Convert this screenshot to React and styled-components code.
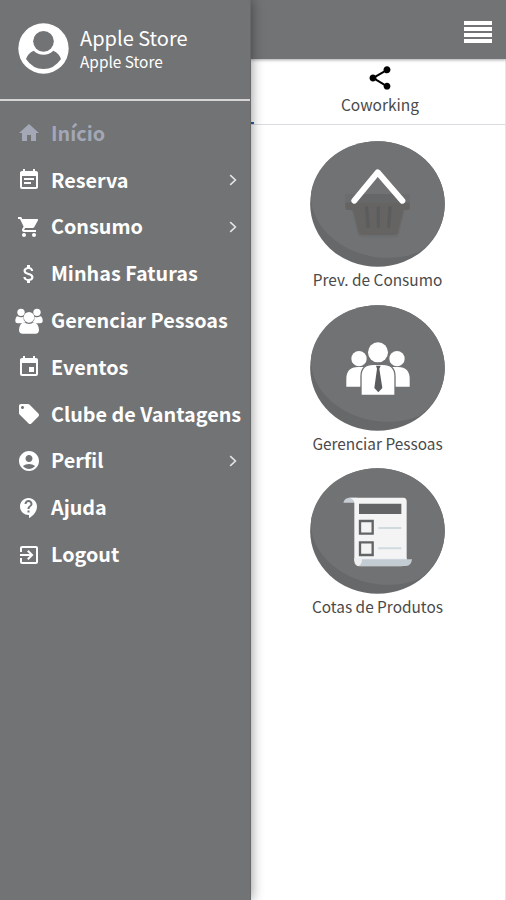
import React from "react";
import styled, { createGlobalStyle } from "styled-components";
import {
  MdHome,
  MdEventNote,
  MdShoppingCart,
  MdAttachMoney,
  MdEvent,
  MdLocalOffer,
  MdAccountCircle,
  MdContactSupport,
  MdExitToApp,
  MdShare,
} from "react-icons/md";

const theme = {
  grey: "#727375",
  disc: "#707273",
  discShade: "#66686a",
  muted: "#a3a7b6",
};

const PeopleIcon = () => (
  <svg width="28" height="26" viewBox="0 0 84 78" fill="currentColor">
    <circle cx="18" cy="13" r="11" />
    <circle cx="66" cy="13" r="11" />
    <path d="M8 25q9 5 17 1q-1 10 7 17q-6 0-9 3H9Q0 46 1 37Q2 26 8 25z" />
    <path d="M76 25q-9 5-17 1q1 10-7 17q6 0 9 3h14q9 0 8-9q-1-11-7-12z" />
    <circle cx="42" cy="28" r="16" />
    <path d="M27 43q15 10 30 0q14 4 15 23q0 11-11 11H23q-11 0-11-11q1-19 15-23z" />
  </svg>
);

const Avatar = () => (
  <svg width="51" height="51" viewBox="0 0 153 153">
    <circle cx="76.500" cy="76.500" r="75.500" fill="#fff" />
    <circle cx="76.500" cy="55" r="31" fill={theme.grey} />
    <path
      d="M47 83Q29 91 24 108Q44 138 76.500 138Q109 138 129 108Q124 91 106 83Q94 95 76.500 95Q59 95 47 83z"
      fill={theme.grey}
    />
  </svg>
);

const Chevron = () => (
  <svg width="8" height="12" viewBox="0 0 8 12" fill="none">
    <path d="M1.200 1.200L6.400 6L1.200 10.800" stroke="#e5e5e6" strokeWidth="1.600" />
  </svg>
);

const Disc = ({ children }) => (
  <svg width="135" height="126" viewBox="0 0 405 378">
    <ellipse cx="202.500" cy="189" rx="202" ry="188.500" fill={theme.discShade} />
    <path
      d="M4 150C22 62 104 1 203 1C314 1 404 85 404 189C404 249 374 301 326 334C292 347 260 352 218 350C112 344 22 275 6 195Q2 172 4 150z"
      fill={theme.disc}
    />
    {children}
  </svg>
);

const BasketArt = () => (
  <Disc>
    <path d="M106 159h193v37q0 12-15 12l-16 68q-3 13-15 13H157q-12 0-15-13l-17-68q-19 0-19-12z" fill="#6b6d6e" />
    <path d="M135 159h136l12 26H122z" fill="#666768" />
    <path d="M106 185h193v16q0 6-9 6h-9l-17 66q-2 9-12 9H158q-10 0-12-9l-17-66h-15q-8 0-8-6z" fill="#666463" />
    <path d="M170 200l4 56M205 200v56M240 200l-4 56" stroke="#5b5c5d" strokeWidth="10" strokeLinecap="round" />
    <path
      d="M133 179L203 94L277 179"
      fill="none"
      stroke="#fff"
      strokeWidth="18"
      strokeLinecap="round"
      strokeLinejoin="round"
    />
  </Disc>
);

const TeamArt = () => (
  <Disc>
    <g fill="#fff">
      <circle cx="147" cy="161" r="23" />
      <circle cx="261" cy="161" r="23" />
      <path d="M109 245v-24q0-34 35-35h22l-14 59z" />
      <path d="M299 245v-24q0-34-35-35h-22l14 59z" />
    </g>
    <path d="M153 271v-57q0-36 37-36h28q37 0 37 36v57z" fill="#fff" stroke={theme.disc} strokeWidth="4" />
    <circle cx="204" cy="142" r="30" fill="#fff" />
    <path d="M198 182h14l-4 9l9 58l-12 13l-12-13l8-58z" fill="#595b5d" />
  </Disc>
);

const ListArt = () => (
  <Disc>
    <path d="M100 104q3-13 17-15h25v15z" fill="#c6cdd3" />
    <path d="M118 89h162q10 0 10 11v188H149q-13 0-16-11V103q-2-10-15-14z" fill="#f4f4f5" />
    <path d="M133 270h157v9q-1 16-17 16H149q-16-1-16-17z" fill="#eeeff1" />
    <path d="M156 274h150q-2 20-18 20H146q10-5 10-20z" fill="#c3cbd3" />
    <path d="M147 107h127v31H147z" fill="#626466" />
    <g fill="#f4f4f5" stroke="#626466" strokeWidth="7">
      <path d="M150 159h38v38h-38z" />
      <path d="M150 223h38v38h-38z" />
    </g>
    <path d="M205 180h69M205 241h69" stroke="#d0d9de" strokeWidth="6" />
  </Disc>
);

const menu = [
  { label: "Início", icon: MdHome, active: true },
  { label: "Reserva", icon: MdEventNote, more: true },
  { label: "Consumo", icon: MdShoppingCart, more: true },
  { label: "Minhas Faturas", icon: MdAttachMoney },
  { label: "Gerenciar Pessoas", icon: PeopleIcon },
  { label: "Eventos", icon: MdEvent },
  { label: "Clube de Vantagens", icon: MdLocalOffer },
  { label: "Perfil", icon: MdAccountCircle, more: true },
  { label: "Ajuda", icon: MdContactSupport },
  { label: "Logout", icon: MdExitToApp },
];

const services = [
  { label: "Prev. de Consumo", art: BasketArt },
  { label: "Gerenciar Pessoas", art: TeamArt },
  { label: "Cotas de Produtos", art: ListArt },
];

const App = () => (
  <>
    <GlobalStyle />
    <Screen>
      <Sidebar>
        <Profile>
          <Avatar />
          <div>
            <UserName>Apple Store</UserName>
            <UserPlace>Apple Store</UserPlace>
          </div>
        </Profile>
        <Menu>
          {menu.map(({ label, icon: Icon, active, more }) => (
            <MenuItem key={label} $active={active}>
              <IconBox>
                <Icon />
              </IconBox>
              <MenuLabel>{label}</MenuLabel>
              {more && <Chevron />}
            </MenuItem>
          ))}
        </Menu>
      </Sidebar>
      <Main>
        <TopBar>
          <MenuButton aria-label="Menu">
            <span />
            <span />
            <span />
            <span />
          </MenuButton>
        </TopBar>
        <Tab>
          <MdShare size={28} />
          <TabLabel>Coworking</TabLabel>
          <TabMarker />
        </Tab>
        <Services>
          {services.map(({ label, art: Art }) => (
            <Service key={label}>
              <Art />
              <ServiceLabel>{label}</ServiceLabel>
            </Service>
          ))}
        </Services>
      </Main>
    </Screen>
  </>
);

export default App;

const GlobalStyle = createGlobalStyle`
  * {
    box-sizing: border-box;
  }

  body {
    margin: 0;
    font-family: "Noto Sans CJK JP", "Noto Sans", sans-serif;
  }

  svg {
    display: block;
    flex-shrink: 0;
  }
`;

const Screen = styled.div`
  display: flex;
  width: 506px;
  height: 900px;
  overflow: hidden;
  background: white;
`;

const Sidebar = styled.aside`
  position: relative;
  z-index: 1;
  width: 251px;
  flex-shrink: 0;
  margin-right: -1px;
  color: white;
  background: ${theme.grey};
  border-right: 1px solid #68696b;
  box-shadow: 0 0 12px rgba(0, 0, 0, 0.45);
`;

const Profile = styled.div`
  display: flex;
  align-items: center;
  gap: 11px;
  height: 101px;
  padding: 0 0 2px 18px;
  border-bottom: 2px solid #d5d5d6;
`;

const UserName = styled.div`
  font-size: 20px;
  line-height: 25px;
`;

const UserPlace = styled.div`
  font-size: 15.400px;
  line-height: 23px;
`;

const Menu = styled.nav`
  display: flex;
  flex-direction: column;
  padding-top: 9px;
`;

const MenuItem = styled.a`
  display: flex;
  align-items: center;
  height: 46.800px;
  padding: 0 13px 0 14px;
  color: ${({ $active }) => ($active ? theme.muted : "white")};
`;

const IconBox = styled.span`
  display: flex;
  justify-content: center;
  flex-shrink: 0;
  width: 29px;
  margin-right: 8px;
  font-size: 24px;
`;

const MenuLabel = styled.span`
  flex: 1;
  min-width: 0;
  margin-top: -1px;
  font-size: 19.800px;
  font-weight: 700;
  line-height: 30px;
  white-space: nowrap;
`;

const Main = styled.main`
  flex: 1;
  display: flex;
  flex-direction: column;
  border-right: 1px solid #e4e4e4;
`;

const TopBar = styled.header`
  display: flex;
  align-items: center;
  justify-content: flex-end;
  height: 59px;
  margin-right: -1px;
  padding: 4px 14px 0 0;
  background: ${theme.grey};
  box-shadow: 0 1px 3px rgba(0, 0, 0, 0.35);
`;

const MenuButton = styled.button`
  display: flex;
  flex-direction: column;
  gap: 2px;
  width: 28px;
  padding: 0;
  border: 0;
  background: none;

  span {
    width: 100%;
    height: 4px;
    background: white;
  }
`;

const Tab = styled.div`
  position: relative;
  display: flex;
  flex-direction: column;
  align-items: center;
  height: 66px;
  padding: 5px 0 0 5px;
  border-bottom: 1px solid #d9dbdf;
`;

const TabLabel = styled.span`
  font-size: 15.500px;
  line-height: 24px;
  color: #4a4a4a;
`;

const TabMarker = styled.span`
  position: absolute;
  left: 0;
  bottom: 0;
  width: 4px;
  height: 2px;
  background: #2463a8;
`;

const Services = styled.div`
  display: flex;
  flex-direction: column;
  align-items: center;
  gap: 13.700px;
  padding-top: 16px;
`;

const Service = styled.div`
  display: flex;
  flex-direction: column;
  align-items: center;
`;

const ServiceLabel = styled.span`
  font-size: 15.400px;
  line-height: 24px;
  color: #4a4a4a;
  white-space: nowrap;
`;
